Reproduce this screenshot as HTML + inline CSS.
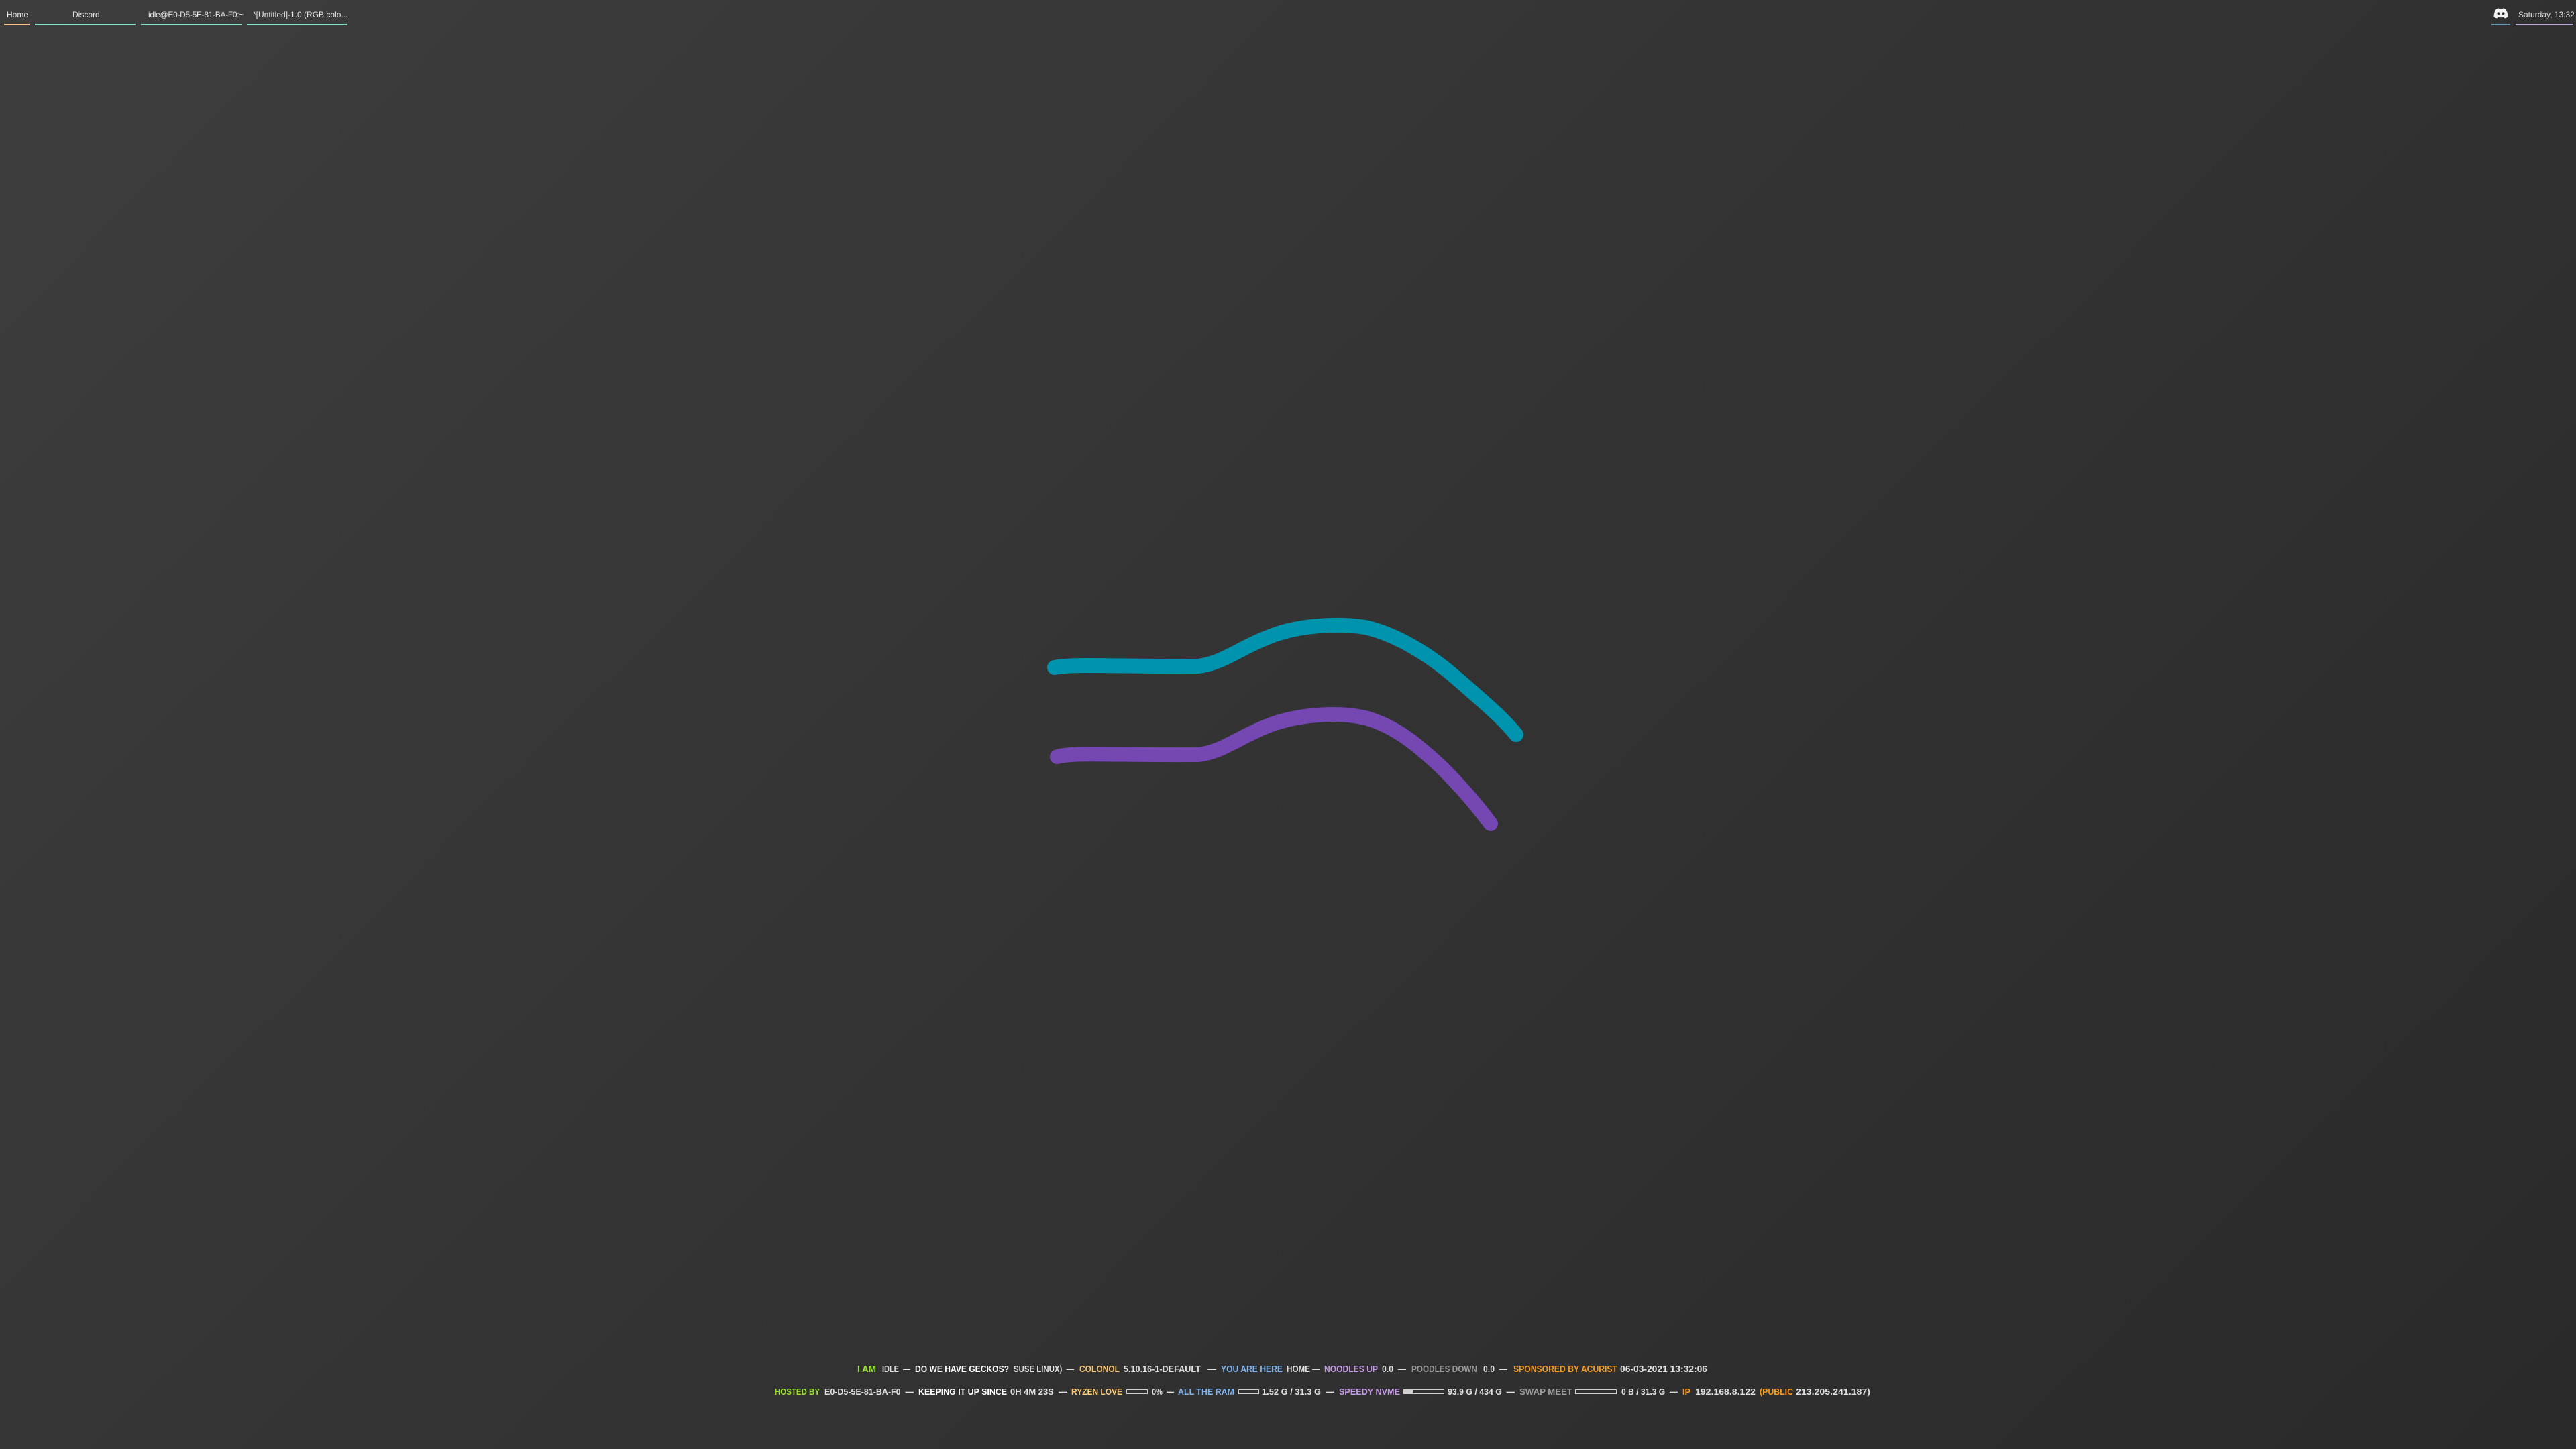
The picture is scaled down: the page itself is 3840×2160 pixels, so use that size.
<!DOCTYPE html>
<html><head><meta charset="utf-8"><style>
html,body{margin:0;padding:0}
body{width:3840px;height:2160px;position:relative;overflow:hidden;background:linear-gradient(135deg,#3d3d3d 0%,#333 50%,#2a2a2a 100%);font-family:"Liberation Sans",sans-serif}
.t{position:absolute;top:13px;font-size:12px;color:#e6e6e6;white-space:nowrap;line-height:18px}
.u{position:absolute;top:36px;height:2px}
svg text{white-space:pre}
</style></head><body>
<div class="t" style="left:10px">Home</div><div class="u" style="left:6px;width:38px;background:#f5c18d"></div>
<div class="t" style="left:108px">Discord</div><div class="u" style="left:52px;width:150px;background:#86dcc6"></div>
<div class="t" style="left:221px;letter-spacing:-0.3px">idle@E0-D5-5E-81-BA-F0:~</div><div class="u" style="left:210px;width:150px;background:#86dcc6"></div>
<div class="t" style="left:377px">*[Untitled]-1.0 (RGB colo...</div><div class="u" style="left:368px;width:150px;background:#86dcc6"></div>

<svg style="position:absolute;left:3716px;top:12px" width="24" height="16" viewBox="0 0 24 16"><path d="M5 1.5C7.5 0.5 9 0.5 9 0.5L9.5 1.5Q12 1 14.5 1.5L15 0.5Q17 0.5 19 1.5Q22.5 7 22.5 13Q20.5 15 17.5 15.5L16.5 13.5Q12 15 7.5 13.5L6.5 15.5Q3.5 15 1.5 13Q1.5 7 5 1.5Z" fill="#f2f2f2"/><ellipse cx="8.5" cy="8.5" rx="2" ry="2.2" fill="#333"/><ellipse cx="15.5" cy="8.5" rx="2" ry="2.2" fill="#333"/></svg>
<div class="u" style="left:3714px;width:28px;background:#6f9bb8"></div>
<div class="t" style="left:3754px;color:#ddd">Saturday, 13:32</div><div class="u" style="left:3750px;width:86px;background:#b7a6cf"></div>

<svg style="position:absolute;left:0;top:0" width="3840" height="2160" xml:space="preserve">
<g fill="none" stroke-linecap="round" stroke-linejoin="round" stroke-width="22">
<path d="M1572 995 C1600 989 1660 994 1786 993 C1820 990 1850 965 1890 950 C1930 933 1990 928 2035 935 C2080 945 2130 975 2170 1010 C2210 1045 2240 1070 2260 1095" stroke="#0093ad"/>
<path d="M1576 1128 C1600 1121 1660 1126 1786 1125 C1820 1122 1850 1097 1890 1082 C1930 1066 1990 1060 2035 1070 C2080 1082 2115 1112 2150 1145 C2180 1175 2205 1205 2222 1228" stroke="#7547b3"/>
</g>
<g font-family="Liberation Sans, sans-serif" font-weight="bold" font-size="13">
<text y="2045" x="1278" textLength="28" lengthAdjust="spacingAndGlyphs" fill="#9be22d">I AM</text>
<text y="2045" x="1315" textLength="42" lengthAdjust="spacingAndGlyphs" fill="#e0e0e0">IDLE  —</text>
<text y="2045" x="1364" textLength="140" lengthAdjust="spacingAndGlyphs" fill="#fff">DO WE HAVE GECKOS?</text>
<text y="2045" x="1511" textLength="90" lengthAdjust="spacingAndGlyphs" fill="#e0e0e0">SUSE LINUX)  —</text>
<text y="2045" x="1609" textLength="60" lengthAdjust="spacingAndGlyphs" fill="#f9c674">COLONOL</text>
<text y="2045" x="1675" textLength="138" lengthAdjust="spacingAndGlyphs" fill="#e0e0e0">5.10.16-1-DEFAULT   —</text>
<text y="2045" x="1820" textLength="92" lengthAdjust="spacingAndGlyphs" fill="#7fb4ef">YOU ARE HERE</text>
<text y="2045" x="1918" textLength="50" lengthAdjust="spacingAndGlyphs" fill="#e0e0e0">HOME —</text>
<text y="2045" x="1974" textLength="80" lengthAdjust="spacingAndGlyphs" fill="#c59ae8">NOODLES UP</text>
<text y="2045" x="2060" textLength="36" lengthAdjust="spacingAndGlyphs" fill="#e0e0e0">0.0  —</text>
<text y="2045" x="2104" textLength="98" lengthAdjust="spacingAndGlyphs" fill="#9a9a9a">POODLES DOWN</text>
<text y="2045" x="2211" textLength="36" lengthAdjust="spacingAndGlyphs" fill="#e0e0e0">0.0  —</text>
<text y="2045" x="2256" textLength="155" lengthAdjust="spacingAndGlyphs" fill="#f99a1e">SPONSORED BY ACURIST</text>
<text y="2045" x="2415" textLength="130" lengthAdjust="spacingAndGlyphs" fill="#e0e0e0">06-03-2021 13:32:06</text>

<text y="2079" x="1155" textLength="67" lengthAdjust="spacingAndGlyphs" fill="#9be22d">HOSTED BY</text>
<text y="2079" x="1229" textLength="133" lengthAdjust="spacingAndGlyphs" fill="#e0e0e0">E0-D5-5E-81-BA-F0  —</text>
<text y="2079" x="1369" textLength="132" lengthAdjust="spacingAndGlyphs" fill="#fff">KEEPING IT UP SINCE</text>
<text y="2079" x="1506" textLength="85" lengthAdjust="spacingAndGlyphs" fill="#e0e0e0">0H 4M 23S  —</text>
<text y="2079" x="1597" textLength="76" lengthAdjust="spacingAndGlyphs" fill="#f9c674">RYZEN LOVE</text>
<text y="2079" x="1717" textLength="33" lengthAdjust="spacingAndGlyphs" fill="#e0e0e0">0%  —</text>
<text y="2079" x="1756" textLength="84" lengthAdjust="spacingAndGlyphs" fill="#7fb4ef">ALL THE RAM</text>
<text y="2079" x="1881" textLength="108" lengthAdjust="spacingAndGlyphs" fill="#e0e0e0">1.52 G / 31.3 G  —</text>
<text y="2079" x="1996" textLength="91" lengthAdjust="spacingAndGlyphs" fill="#c59ae8">SPEEDY NVME</text>
<text y="2079" x="2158" textLength="100" lengthAdjust="spacingAndGlyphs" fill="#e0e0e0">93.9 G / 434 G  —</text>
<text y="2079" x="2265" textLength="79" lengthAdjust="spacingAndGlyphs" fill="#9a9a9a">SWAP MEET</text>
<text y="2079" x="2417" textLength="84" lengthAdjust="spacingAndGlyphs" fill="#e0e0e0">0 B / 31.3 G  —</text>
<text y="2079" x="2508" textLength="12" lengthAdjust="spacingAndGlyphs" fill="#f99a1e">IP</text>
<text y="2079" x="2527" textLength="90" lengthAdjust="spacingAndGlyphs" fill="#e0e0e0">192.168.8.122</text>
<text y="2079" x="2623" textLength="50" lengthAdjust="spacingAndGlyphs" fill="#f99a1e">(PUBLIC</text>
<text y="2079" x="2677" textLength="111" lengthAdjust="spacingAndGlyphs" fill="#e0e0e0">213.205.241.187)</text>
</g>
<g fill="none" stroke="#d0d0d0" stroke-width="1">
<rect x="1679.5" y="2071.5" width="31" height="6"/>
<rect x="1846.5" y="2071.5" width="30" height="6"/>
<rect x="2092.5" y="2071.5" width="60" height="6"/>
<rect x="2348.5" y="2071.5" width="61" height="6"/>
</g>
<rect x="2093" y="2072" width="13" height="5" fill="#d0d0d0"/>
</svg>
</body></html>
